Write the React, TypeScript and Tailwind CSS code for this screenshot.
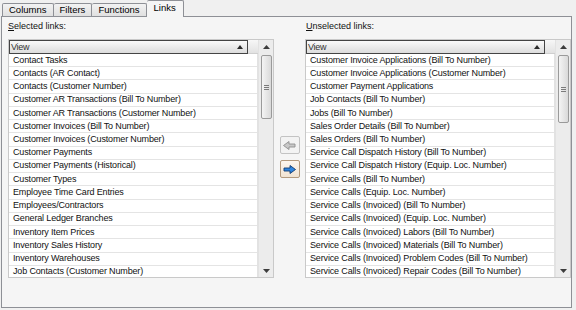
import React from "react";

const leftItems = [
  "Contact Tasks",
  "Contacts (AR Contact)",
  "Contacts (Customer Number)",
  "Customer AR Transactions (Bill To Number)",
  "Customer AR Transactions (Customer Number)",
  "Customer Invoices (Bill To Number)",
  "Customer Invoices (Customer Number)",
  "Customer Payments",
  "Customer Payments (Historical)",
  "Customer Types",
  "Employee Time Card Entries",
  "Employees/Contractors",
  "General Ledger Branches",
  "Inventory Item Prices",
  "Inventory Sales History",
  "Inventory Warehouses",
  "Job Contacts (Customer Number)",
];

const rightItems = [
  "Customer Invoice Applications (Bill To Number)",
  "Customer Invoice Applications (Customer Number)",
  "Customer Payment Applications",
  "Job Contacts (Bill To Number)",
  "Jobs (Bill To Number)",
  "Sales Order Details (Bill To Number)",
  "Sales Orders (Bill To Number)",
  "Service Call Dispatch History (Bill To Number)",
  "Service Call Dispatch History (Equip. Loc. Number)",
  "Service Calls (Bill To Number)",
  "Service Calls (Equip. Loc. Number)",
  "Service Calls (Invoiced) (Bill To Number)",
  "Service Calls (Invoiced) (Equip. Loc. Number)",
  "Service Calls (Invoiced) Labors (Bill To Number)",
  "Service Calls (Invoiced) Materials (Bill To Number)",
  "Service Calls (Invoiced) Problem Codes (Bill To Number)",
  "Service Calls (Invoiced) Repair Codes (Bill To Number)",
];

function ScrollBar({ thumbH }: { thumbH: number }) {
  return (
    <div className="w-[15px] flex flex-col bg-[#ececec] border-l border-[#e2e2e2]">
      <div className="h-[14px] flex items-center justify-center">
        <svg width="7" height="4" viewBox="0 0 7 4">
          <polygon points="0,4 3.5,0 7,4" fill="#3c3c3c" />
        </svg>
      </div>
      <div className="flex-1 px-[1.5px] pt-[1px]">
        <div
          className="rounded-[2px] border border-[#9a9a9a] bg-gradient-to-r from-[#f4f4f4] to-[#d9d9d9] flex flex-col items-center justify-center gap-[1px]"
          style={{ height: thumbH }}
        >
          <div className="w-[5px] h-px bg-[#7a7a7a]" />
          <div className="w-[5px] h-px bg-[#7a7a7a]" />
          <div className="w-[5px] h-px bg-[#7a7a7a]" />
        </div>
      </div>
      <div className="h-[13px] flex items-center justify-center">
        <svg width="7" height="4" viewBox="0 0 7 4">
          <polygon points="0,0 7,0 3.5,4" fill="#3c3c3c" />
        </svg>
      </div>
    </div>
  );
}

function LinkList({ items, thumbH }: { items: string[]; thumbH: number }) {
  return (
    <div className="h-[239px] flex border border-[#c9c9c9] bg-white">
      <div className="flex-1 flex flex-col min-w-0">
        <div className="h-[14px] flex">
          <div className="flex-1 border border-[#444] bg-gradient-to-b from-[#fafafa] to-[#dcdcdc] flex items-center pl-[1px] pr-[4px] text-[#333]">
            <span className="flex-1 tracking-[-0.3px]">View</span>
            <svg width="6" height="4" viewBox="0 0 6 4">
              <polygon points="0,4 3,0 6,4" fill="#2a2a2a" />
            </svg>
          </div>
          <div className="w-[10px] bg-gradient-to-b from-[#f7f7f7] to-[#e2e2e2] border-b border-[#cfcfcf]" />
        </div>
        <div className="flex-1 overflow-hidden border-r border-[#e2e2e2]">
          {items.map((t) => (
            <div
              key={t}
              className="h-[13.24px] flex items-center pl-[4px] border-b border-[#e4e4e4] text-[#111] whitespace-nowrap tracking-[-0.15px]"
            >
              {t}
            </div>
          ))}
        </div>
      </div>
      <ScrollBar thumbH={thumbH} />
    </div>
  );
}

function Arrow({ dir, color, stroke }: { dir: "l" | "r"; color: string; stroke: string }) {
  const pts =
    dir === "r"
      ? "1,3 7,3 7,0.5 12.5,4.5 7,8.5 7,6 1,6"
      : "12,3 6,3 6,0.5 0.5,4.5 6,8.5 6,6 12,6";
  return (
    <svg width="14" height="9" viewBox="0 0 14 9">
      <polygon points={pts} fill={color} stroke={stroke} strokeWidth="0.9" strokeLinejoin="round" />
    </svg>
  );
}

export default function App() {
  return (
    <div className="w-[576px] h-[310px] bg-[#f0f0f0] font-['Liberation_Sans',Arial,sans-serif] text-[9px] leading-none text-black overflow-hidden">
      <div className="h-[16px] flex items-end pl-[2px] text-[9.5px]">
        <div className="h-[13px] px-[6px] flex items-center border border-b-0 border-[#8e9096] bg-gradient-to-b from-[#f2f2f2] to-[#e0e0e0] rounded-t-[2px]">
          Columns
        </div>
        <div className="h-[13px] px-[6px] flex items-center border border-l-0 border-b-0 border-[#8e9096] bg-gradient-to-b from-[#f2f2f2] to-[#e0e0e0] rounded-t-[2px]">
          Filters
        </div>
        <div className="h-[13px] px-[6px] flex items-center border border-l-0 border-b-0 border-[#8e9096] bg-gradient-to-b from-[#f2f2f2] to-[#e0e0e0] rounded-t-[2px]">
          Functions
        </div>
        <div className="relative z-10 -mb-px h-[17px] px-[7px] pb-[3px] flex items-center border border-l-0 border-b-0 border-[#8e9096] bg-[#f5f5f5] rounded-t-[2px]">
          Links
        </div>
      </div>
      <div className="ml-[1px] w-[571px] h-[292px] border border-[#8e9096] bg-[#f5f5f5] pl-[6px] pt-[5px] flex">
        <div className="w-[266px] flex flex-col">
          <div className="h-[17px] text-[#111]">
            <span className="underline">S</span>elected links:
          </div>
          <LinkList items={leftItems} thumbH={64} />
        </div>
        <div className="w-[31px] flex flex-col items-center pt-[114px] gap-[6px]">
          <div className="w-[20px] h-[18px] border border-[#c3c3c3] bg-[#f3f3f3] rounded-[2px] flex items-center justify-center">
            <Arrow dir="l" color="#c8c8c8" stroke="#8f8f8f" />
          </div>
          <div className="w-[20px] h-[18px] border border-[#b39a7e] bg-gradient-to-b from-[#fdf6ee] to-[#f1e3d2] rounded-[2px] flex items-center justify-center">
            <Arrow dir="r" color="#2f86e0" stroke="#123a70" />
          </div>
        </div>
        <div className="w-[266px] flex flex-col">
          <div className="h-[17px] text-[#111] pl-px">
            <span className="underline">U</span>nselected links:
          </div>
          <LinkList items={rightItems} thumbH={68} />
        </div>
      </div>
    </div>
  );
}
